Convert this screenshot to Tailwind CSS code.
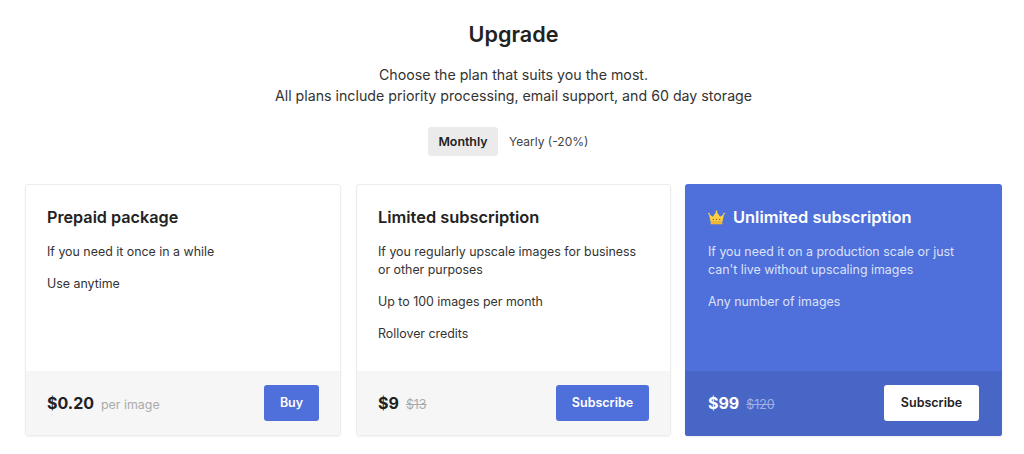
<!DOCTYPE html>
<html lang="en">
<head>
  <meta charset="UTF-8">
  <title>Upgrade</title>
  <script src="https://cdn.jsdelivr.net/npm/@tailwindcss/browser@4"></script>
</head>
<body class="bg-white font-['Inter',sans-serif] text-[#222222]">
  <div class="w-[1024px] h-[454px] overflow-hidden flex flex-col items-center pt-[21px] pl-[3px]">
    <h1 class="text-[21.6px] leading-[27px] font-semibold">Upgrade</h1>
    <p class="mt-[16px] text-[14.2px] leading-[21px] text-center text-[#333333]">Choose the plan that suits you the most.<br>All plans include priority processing, email support, and 60 day storage</p>

    <div class="mt-[21px] flex items-center gap-[2px]">
      <div class="w-[70px] h-[29px] pt-px flex items-center justify-center rounded-[3px] bg-[#ebebeb] text-[12.4px] font-semibold">Monthly</div>
      <div class="w-[99px] h-[29px] pl-[9px] flex items-center text-[12px] text-[#444444]">Yearly (-20%)</div>
    </div>

    <div class="mt-[28px] w-[977px] grid grid-cols-[316px_316px_317px] gap-[14px]">
      <!-- prepaid -->
      <div class="h-[252px] flex flex-col rounded-[3px] border border-[#ececec] shadow-[0_1px_2px_rgba(0,0,0,0.05)] overflow-hidden">
        <div class="flex-1 pt-[22px] px-[21px]">
          <h2 class="text-[16.2px] leading-[20px] font-semibold">Prepaid package</h2>
          <p class="mt-[16px] text-[12.4px] leading-[18px] text-[#333333]">If you need it once in a while</p>
          <p class="mt-[14px] text-[12.4px] leading-[18px] text-[#333333]">Use anytime</p>
        </div>
        <div class="h-[64px] bg-[#f6f6f6] px-[21px] flex items-center justify-between">
          <div class="flex items-baseline gap-[7px]">
            <span class="text-[16px] font-bold">$0.20</span>
            <span class="text-[12.4px] text-[#aaaaaa]">per image</span>
          </div>
          <button class="h-[36px] w-[55px] rounded-[3px] bg-[#4f6fdb] text-white text-[12.5px] font-semibold">Buy</button>
        </div>
      </div>

      <!-- limited -->
      <div class="ml-px h-[252px] flex flex-col rounded-[3px] border border-[#ececec] shadow-[0_1px_2px_rgba(0,0,0,0.05)] overflow-hidden">
        <div class="flex-1 pt-[22px] px-[21px]">
          <h2 class="text-[16.4px] leading-[20px] font-semibold">Limited subscription</h2>
          <p class="mt-[16px] text-[12.4px] leading-[18px] text-[#333333]">If you regularly upscale images for business<br>or other purposes</p>
          <p class="mt-[14px] text-[12.4px] leading-[18px] text-[#333333]">Up to 100 images per month</p>
          <p class="mt-[14px] text-[12.4px] leading-[18px] text-[#333333]">Rollover credits</p>
        </div>
        <div class="h-[64px] bg-[#f6f6f6] px-[21px] flex items-center justify-between">
          <div class="flex items-baseline gap-[7px]">
            <span class="text-[16px] font-bold">$9</span>
            <span class="text-[12.4px] text-[#aaaaaa] line-through">$13</span>
          </div>
          <button class="h-[36px] w-[93px] rounded-[3px] bg-[#4f6fdb] text-white text-[12.5px] font-semibold">Subscribe</button>
        </div>
      </div>

      <!-- unlimited -->
      <div class="h-[252px] flex flex-col rounded-[3px] bg-[#4f6fdb] overflow-hidden shadow-[0_1px_2px_rgba(0,0,0,0.08)]">
        <div class="flex-1 pt-[23px] px-[23px]">
          <h2 class="flex items-center gap-[8px] text-[16.4px] leading-[20px] font-semibold text-white">
            <svg viewBox="0 0 16 14" class="w-[17px] h-[15px]">
              <path d="M2.5 11 L0.8 3.6 L4.6 6.4 L8 1.4 L11.4 6.4 L15.2 3.6 L13.5 11 Z" fill="#fbd13f"/>
              <rect x="2.5" y="11" width="11" height="2.4" fill="#f3b62c"/>
              <circle cx="0.9" cy="3.4" r="0.8" fill="#fbd13f"/>
              <circle cx="8" cy="1.2" r="0.9" fill="#fbd13f"/>
              <circle cx="15.1" cy="3.4" r="0.8" fill="#fbd13f"/>
              <circle cx="5" cy="8.8" r="0.7" fill="#d9473a"/>
              <circle cx="8" cy="8.8" r="0.7" fill="#d9473a"/>
              <circle cx="11" cy="8.8" r="0.7" fill="#d9473a"/>
            </svg>
            Unlimited subscription
          </h2>
          <p class="mt-[16px] text-[12.4px] leading-[18px] text-[#dce3f8]">If you need it on a production scale or just<br>can't live without upscaling images</p>
          <p class="mt-[14px] text-[12.4px] leading-[18px] text-[#dce3f8]">Any number of images</p>
        </div>
        <div class="h-[65px] bg-[#4766c6] px-[23px] pb-[1px] flex items-center justify-between">
          <div class="flex items-baseline gap-[7px]">
            <span class="text-[16px] font-bold text-white">$99</span>
            <span class="text-[12.4px] text-[#a0b0e6] line-through">$120</span>
          </div>
          <button class="h-[36px] w-[95px] rounded-[3px] bg-white text-[#222222] text-[12.5px] font-semibold">Subscribe</button>
        </div>
      </div>
    </div>
  </div>
</body>
</html>
